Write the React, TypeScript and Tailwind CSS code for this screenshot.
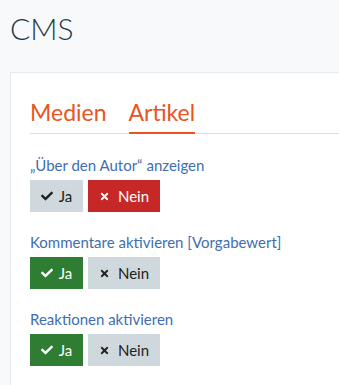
import { FaCheck, FaTimes } from 'react-icons/fa'

const settings = [
  { label: '„Über den Autor“ anzeigen', value: false },
  { label: 'Kommentare aktivieren [Vorgabewert]', value: true },
  { label: 'Reaktionen aktivieren', value: true },
]

function Toggle({ label, value }: { label: string; value: boolean }) {
  return (
    <div className="mb-[21px]">
      <div className="mb-[6px] text-[15px] leading-[18px] text-[#3e6eaf]">{label}</div>
      <div className="flex gap-[5px]">
        <button
          className={`flex h-[32px] w-[53px] items-center justify-center gap-[6px] text-[15px] ${
            value ? 'bg-[#2e7d32] text-white' : 'bg-[#cfd8dc] text-[#222]'
          }`}
        >
          <FaCheck className="h-[12px] w-[12px]" />
          Ja
        </button>
        <button
          className={`flex h-[32px] w-[72px] items-center justify-center gap-[8px] text-[15px] ${
            value ? 'bg-[#cfd8dc] text-[#222]' : 'bg-[#c62828] text-white'
          }`}
        >
          <FaTimes className="h-[11px] w-[11px]" />
          Nein
        </button>
      </div>
    </div>
  )
}

export default function App() {
  return (
    <div className="min-h-[385px] bg-[#f8f9fa] font-['Lato',sans-serif]">
      <h1 className="px-[10px] pt-[10px] text-[30px] font-light leading-[36px] text-[#263747]">CMS</h1>
      <div className="ml-[10px] mt-[26px] border border-r-0 border-[#e6eaf0] bg-white pl-[19px] pt-[22px]">
        <div className="flex gap-[22px] border-b border-[#dcdfe3] text-[23px] leading-[34px] text-[#e8551f]">
          <span className="pb-[4px]">Medien</span>
          <span className="-mb-px border-b-2 border-[#e8551f] pb-[3px]">Artikel</span>
        </div>
        <div className="pt-[22px]">
          {settings.map((s) => (
            <Toggle key={s.label} label={s.label} value={s.value} />
          ))}
        </div>
      </div>
    </div>
  )
}
